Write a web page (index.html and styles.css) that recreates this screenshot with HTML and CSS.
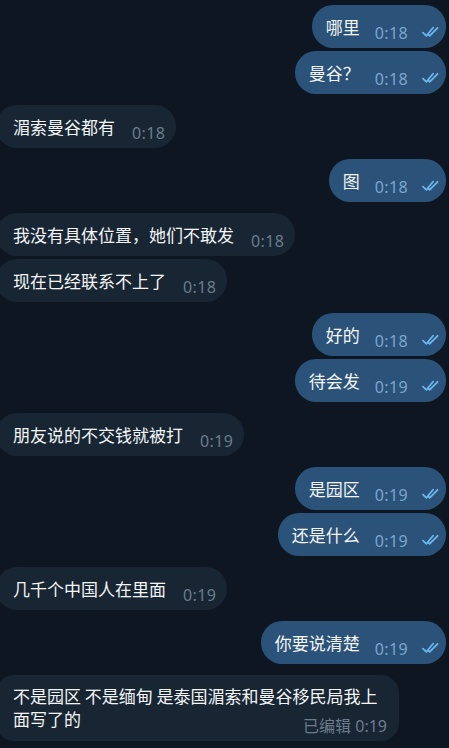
FILE: index.html
```html
<!DOCTYPE html>
<html lang="zh-CN">
  <head>
    <meta charset="UTF-8" />
    <meta name="viewport" content="width=device-width, initial-scale=1.0" />
    <title>Chat</title>
    <link rel="stylesheet" href="styles.css">
  </head>
  <body>
    <svg width="0" height="0" class="defs">
      <symbol id="ticks" viewBox="0 0 18 12">
        <path d="M1 6.6 L4.4 9.8 L11 1.8" />
        <path d="M7.6 9.8 L15.6 1.8 M6.4 8.6 L7.6 9.8" />
      </symbol>
    </svg>
    <div class="chat">
      <div class="row out">
        <div class="bubble"><span class="text">哪里</span><span class="time">0:18</span><svg class="ticks"><use href="#ticks" /></svg></div>
      </div>
      <div class="row out">
        <div class="bubble"><span class="text">曼谷？</span><span class="time">0:18</span><svg class="ticks"><use href="#ticks" /></svg></div>
      </div>
      <div class="row in gap">
        <div class="bubble"><span class="text">湄索曼谷都有</span><span class="time">0:18</span></div>
      </div>
      <div class="row out gap">
        <div class="bubble"><span class="text">图</span><span class="time">0:18</span><svg class="ticks"><use href="#ticks" /></svg></div>
      </div>
      <div class="row in gap">
        <div class="bubble"><span class="text">我没有具体位置，她们不敢发</span><span class="time">0:18</span></div>
      </div>
      <div class="row in">
        <div class="bubble"><span class="text">现在已经联系不上了</span><span class="time">0:18</span></div>
      </div>
      <div class="row out gap">
        <div class="bubble"><span class="text">好的</span><span class="time">0:18</span><svg class="ticks"><use href="#ticks" /></svg></div>
      </div>
      <div class="row out">
        <div class="bubble"><span class="text">待会发</span><span class="time">0:19</span><svg class="ticks"><use href="#ticks" /></svg></div>
      </div>
      <div class="row in gap">
        <div class="bubble"><span class="text">朋友说的不交钱就被打</span><span class="time">0:19</span></div>
      </div>
      <div class="row out gap">
        <div class="bubble"><span class="text">是园区</span><span class="time">0:19</span><svg class="ticks"><use href="#ticks" /></svg></div>
      </div>
      <div class="row out">
        <div class="bubble"><span class="text">还是什么</span><span class="time">0:19</span><svg class="ticks"><use href="#ticks" /></svg></div>
      </div>
      <div class="row in gap">
        <div class="bubble"><span class="text">几千个中国人在里面</span><span class="time">0:19</span></div>
      </div>
      <div class="row out gap">
        <div class="bubble"><span class="text">你要说清楚</span><span class="time">0:19</span><svg class="ticks"><use href="#ticks" /></svg></div>
      </div>
      <div class="row in gap">
        <div class="bubble long">
          <div class="text">不是园区 不是缅甸 是泰国湄索和曼谷移民局我上面写了的<span class="time">已编辑 0:19</span></div>
        </div>
      </div>
    </div>
  </body>
</html>
```

FILE: styles.css
```css
body {
  margin: 0;
  background-color: #0e1621;
  font-family: "Noto Sans", "Noto Sans CJK SC", sans-serif;
  overflow: hidden;
}

.defs {
  position: absolute;
}

.chat {
  display: flex;
  flex-direction: column;
  padding-top: 5px;
}

.row {
  display: flex;
  margin-top: 3px;
}

.row.gap {
  margin-top: 11px;
}

.row:first-child {
  margin-top: 0;
}

.bubble {
  display: flex;
  align-items: flex-end;
  box-sizing: border-box;
  height: 43px;
  padding: 10px 14px 6px;
  border-radius: 21px;
  color: #f3f5f7;
}

.text {
  font-family: "Noto Sans CJK SC", sans-serif;
  font-size: 17px;
  line-height: 23px;
  margin-bottom: 4px;
  white-space: nowrap;
}

.time {
  font-family: "Noto Sans", "Noto Sans CJK SC", sans-serif;
  font-size: 16px;
  line-height: 18px;
  letter-spacing: 0.4px;
  margin-left: 15px;
  white-space: nowrap;
}

.out {
  justify-content: flex-end;
  padding-right: 3px;
}

.out .bubble {
  background-color: #2b5278;
  padding-right: 6px;
}

.out .time {
  color: #7ca7cf;
}

.ticks {
  width: 18px;
  height: 12px;
  margin: 0 0 4px 14px;
  fill: none;
  stroke: #6cb8ee;
  stroke-width: 1.8;
  stroke-linecap: round;
  stroke-linejoin: round;
}

.in .bubble {
  background-color: #182533;
  margin-left: -4px;
  padding-left: 17px;
  padding-right: 11px;
}

.in .time {
  color: #6b7c8c;
  margin-left: 17px;
}

.in .bubble.long {
  display: block;
  height: auto;
  max-width: 403px;
  padding: 9px 12px 6px 17px;
  border-radius: 18px;
}

.long .text {
  display: flow-root;
  white-space: normal;
  margin-bottom: 0;
}

.long .time {
  float: right;
  margin-top: 10px;
  letter-spacing: 0;
}
```
